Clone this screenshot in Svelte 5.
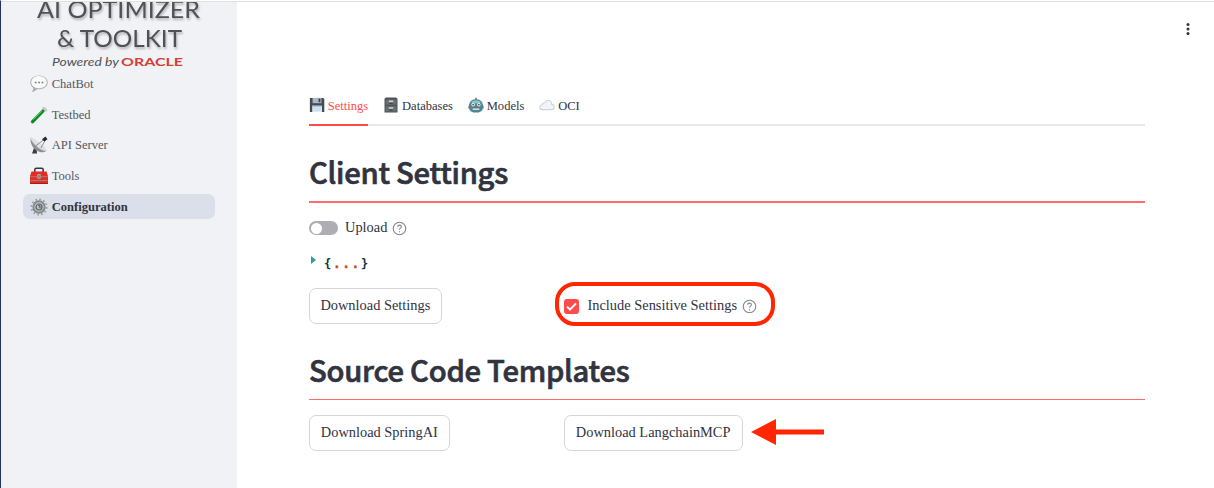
<script>
  const nav = ['ChatBot', 'Testbed', 'API Server', 'Tools', 'Configuration'];
  const tabs = ['Settings', 'Databases', 'Models', 'OCI'];
</script>

{#snippet icon(name)}
  <svg class="icon" viewBox="0 0 18 18" aria-hidden="true">
    {#if name === 'ChatBot'}
      <path d="M9 .5C4 .5.3 3.5.3 7.5c0 2.2 1.1 4.2 3 5.4.1 1.7-.7 2.9-1.8 4 2.4-.2 4.2-1.2 5.4-2.7l1.8.1c5.2 0 9-2.9 9-6.8S14 .5 9 .5z" fill="#adadad" />
      <path d="M9 1.1C4.4 1.1 1.3 3.8 1.3 7.3s3 6 7.7 6 7.7-2.7 7.7-6S13.6 1.1 9 1.1z" fill="#f9f9f9" />
      <path d="M4.8 6.7h1.7v1.6H4.8zM8.2 6.7h1.7v1.6H8.2zM11.6 6.7h1.7v1.6h-1.7z" fill="#777" />
    {:else if name === 'Testbed'}
      <path d="M2.2 16L14.8 3.2" stroke="#c9d2ce" stroke-width="3.8" stroke-linecap="round" />
      <path d="M2.6 15.6L13 5" stroke="#078b24" stroke-width="3.1" stroke-linecap="round" />
      <path d="M3.5 13.5L12 4.9" stroke="#5dcd59" stroke-width="1" />
      <path d="M13.2 1.8l3.1 2.8" stroke="#c4c6cb" stroke-width="2" stroke-linecap="round" />
    {:else if name === 'API Server'}
      <path d="M4 12l-2 5.5h5L6.7 13z" fill="#3a3d3f" />
      <path d="M.8 1.5C-.5 7 3 14.5 10 16c3 .6 5.7-.2 6.5-1.6z" fill="#8e9190" />
      <path d="M.8 1.5C3 .8 17.2 11.8 16.5 14.4c-1 1.2-5.5.2-9.4-3.6S-.5 2.7.8 1.5z" fill="#dfe0df" />
      <path d="M5.5 10L14 3.5M11 12l4.3-8" stroke="#777" stroke-width=".8" />
      <path d="M12 3.2l3.5-2.6 2 2.6-3.2 2.3z" fill="#272829" />
    {:else if name === 'Tools'}
      <path d="M4.8 5V2.8q0-1.6 1.6-1.6h5.2q1.6 0 1.6 1.6V5" fill="none" stroke="#35343a" stroke-width="1.5" />
      <path d="M1.5 4.5h15L18 9v8H0V9z" fill="#e22c24" />
      <path d="M0 9.2h18v1H0zM.5 13h17v1H.5z" fill="#b07a7c" />
      <path d="M0 16h18v1H0z" fill="#a81c18" />
      <rect x="7.3" y="7" width="3.4" height="4.8" rx=".6" fill="#a6a9aa" />
      <path d="M8.4 8.2h1.2v2.2H8.4z" fill="#6b6d71" />
    {:else if name === 'Configuration'}
      <circle cx="9" cy="9" r="7.7" fill="none" stroke="#a0a2a3" stroke-width="1.7" stroke-dasharray="1.8 2.23" />
      <circle cx="9" cy="9" r="5.7" fill="#c3c5c5" stroke="#85898b" stroke-width="1.9" />
      <circle cx="9" cy="9" r="3" fill="#b9c0c5" stroke="#596168" stroke-width="1.2" />
      <path d="M8.3 7.6l1.8.3-.3 2.3" fill="none" stroke="#3e474e" />
    {:else if name === 'Settings'}
      <path d="M1 1h15l1.2 1.3V17H1z" fill="#47494d" />
      <path d="M4 1h10v6H4z" fill="#aeb6be" />
      <path d="M10.8 1.8h2v4h-2z" fill="#3c4045" />
      <path d="M3.6 9h11v8h-11z" fill="#dceaf4" />
      <path d="M3.6 9h11v1.6h-11z" fill="#6897c3" />
      <path d="M5 12.4h8M5 14.7h8" stroke="#b7c7d2" stroke-width=".7" />
    {:else if name === 'Databases'}
      <path d="M3.4.6h11.2L16.3 2v15.3H1.7V2z" fill="#4d5254" />
      <path d="M2.7 2.8h12.6v5.9H2.7zM2.7 10h12.6v6.4H2.7z" fill="#686e70" />
      <path d="M6.5 4h5v1.8h-5zM6.5 11.4h5v1.8h-5z" fill="#d2d4d4" />
      <path d="M7 7h4M7 14.6h4" stroke="#393e40" stroke-width="1.2" />
    {:else if name === 'Models'}
      <path d="M9 4V.8" stroke="#b76c58" stroke-width="2" />
      <path d="M.5 10L3 7v6.5L.5 13zM17.5 10L15 7v6.5l2.5-.5z" fill="#a45045" />
      <path d="M1.2 9Q2 2.4 9 2.4T16.8 9l-.4 5q-1.2 3.5-7.4 3.5T1.6 14z" fill="#468b9b" />
      <path d="M3.4 5.5Q9 2 14.6 5.5L12.4 7H5.6z" fill="#86c4ca" />
      <circle cx="5.8" cy="8.6" r="2" fill="#e8f3ea" /><circle cx="12.2" cy="8.6" r="2" fill="#e8f3ea" />
      <circle cx="5.8" cy="8.6" r=".9" fill="#4d3039" /><circle cx="12.2" cy="8.6" r=".9" fill="#4d3039" />
      <path d="M9 9l1.2 2.2H7.8z" fill="#c55243" />
      <rect x="4.7" y="12.5" width="8.6" height="2.5" rx="1" fill="#e6e9e4" stroke="#44616c" stroke-width=".7" />
    {:else if name === 'OCI'}
      <path d="M4.2 15C1.7 15 .3 13.5.3 11.6c0-1.8 1.2-3 2.9-3.2.2-1.6 1.7-2.5 3.3-2C7.2 4.2 8.8 3 11 3.3c2.5.3 3.8 2 3.7 4.6 1.8.3 3 1.6 3 3.4 0 2.2-1.4 3.7-3.7 3.7z" fill="#c2cbd4" />
      <path d="M4.6 13.8c-2 0-3.3-1-3.3-2.5s1-2.4 2.8-2.3c0-1.8 1.6-2.3 3-1.7.4-2 2-3.3 4-3 2 .4 3 1.9 2.6 4.4 1.8 0 2.9 1.1 2.9 2.5 0 1.6-1.3 2.6-3 2.6z" fill="#f2f5f7" />
    {/if}
  </svg>
{/snippet}

{#snippet help()}
  <svg class="help" viewBox="0 0 24 24" aria-hidden="true">
    <circle cx="12" cy="12" r="10" />
    <path d="M9 9.3q0-2.8 3-2.8t3 2.8q0 1-1.5 2.1T12 14" />
    <path d="M12 16.2v2" />
  </svg>
{/snippet}

<div class="app">
  <aside>
    <svg class="logo" viewBox="0 0 236 69" role="img" aria-label="AI Optimizer and Toolkit">
      <g class="brand">
        <text x="37" y="18.2" textLength="163" lengthAdjust="spacingAndGlyphs">AI OPTIMIZER</text>
        <text x="57" y="46.5" textLength="125" lengthAdjust="spacingAndGlyphs">&amp; TOOLKIT</text>
      </g>
      <text class="powered" x="52" y="66" textLength="67" lengthAdjust="spacingAndGlyphs">Powered by</text>
      <text class="oracle" x="121" y="66" textLength="62" lengthAdjust="spacingAndGlyphs">ORACLE</text>
    </svg>
    <nav>
      {#each nav as item}
        <a class:active={item === 'Configuration'}>{@render icon(item)}<span>{item}</span></a>
      {/each}
    </nav>
  </aside>
  <main>
    <svg class="menu" viewBox="0 0 4 14" aria-hidden="true">
      <circle cx="2" cy="2.6" r="1.5" /><circle cx="2" cy="7" r="1.5" /><circle cx="2" cy="11.4" r="1.5" />
    </svg>
    <div class="tabs">
      {#each tabs as tab}
        <div class="tab" class:selected={tab === 'Settings'}>{@render icon(tab)}<span>{tab}</span></div>
      {/each}
    </div>
    <h1>Client Settings</h1>
    <div class="rule"></div>
    <div class="upload"><span class="toggle"></span><span class="label">Upload</span>{@render help()}</div>
    <div class="json"><i></i><b>{'{'}<em>...</em>{'}'}</b></div>
    <div class="row">
      <div><button>Download Settings</button></div>
      <div class="check">
        <svg class="box" viewBox="0 0 15 15" aria-hidden="true"><rect width="15" height="15" rx="3" /><path d="M3 7.6l3 3 6-6.2" /></svg>
        <span class="label">Include Sensitive Settings</span>{@render help()}
        <span class="highlight"></span>
      </div>
    </div>
    <h1 class="second">Source Code Templates</h1>
    <div class="rule thin"></div>
    <div class="row templates">
      <div><button class="wide">Download SpringAI</button></div>
      <div class="target">
        <button class="wide">Download LangchainMCP</button>
        <svg class="arrow" viewBox="0 0 74 26" aria-hidden="true"><path d="M0 13L25 0v10.5h48v5H25V26z" /></svg>
      </div>
    </div>
  </main>
</div>

<style>
  :global(body) { margin: 0; background: #fff; }
  .app {
    box-sizing: border-box; width: 1214px; height: 488px; display: flex; overflow: hidden;
    border-left: 1px solid #24315a; border-top: 1px solid #fff; color: #31333f;
    font: 14.4px/20px "Liberation Serif", serif;
  }
  aside { width: 236px; flex: none; background: #f0f2f6; border-top: 1px solid #dfe2df; box-sizing: border-box; }
  .logo { display: block; width: 236px; height: 69px; margin: -2px 0 0 -1px; overflow: hidden; clip-path: inset(2px 0 0 0); }
  .brand { fill: #505153; font: 23px Lato, sans-serif; filter: drop-shadow(1px 2px 1px #0004); }
  .powered { fill: #505153; font: italic 12px Lato, sans-serif; }
  .oracle { fill: #d14035; font: bold 11px Lato, sans-serif; }
  nav { display: flex; flex-direction: column; gap: 5.8px; padding: 2.3px 22px 0; }
  nav a { display: flex; align-items: center; gap: 3.7px; height: 25px; padding-left: 7px; border-radius: 7px; font-size: 12.55px; color: #555762; }
  nav .icon { width: 18px; height: 18px; }
  nav .active { background: #dadfe9; color: #31333f; font-weight: bold; }
  .icon { flex: none; display: block; }
  main { flex: 1; display: flex; flex-direction: column; border-top: 1px solid #dfe2df; padding: 0 69px 0 72px; }
  .menu { width: 4px; height: 14px; align-self: flex-end; margin: 20px -45px 0 0; fill: #31333f; }
  .tabs { display: flex; gap: 15px; margin-top: 57px; height: 31px; border-bottom: 2px solid #e8e8ea; font-size: 12.55px; }
  .tab { display: flex; gap: 2.8px; height: 31px; border-bottom: 2px solid transparent; line-height: 26px; }
  .tab .icon { width: 16px; height: 16px; margin-top: 4px; }
  .selected { color: #ff4b4b; border-color: #ff4b4b; }
  h1 { margin: 24px 0 0; height: 43px; font: 500 29.2px/43px "Noto Sans CJK SC", sans-serif; letter-spacing: -0.25px; white-space: nowrap; -webkit-text-stroke: 0.7px #31333f; }
  .rule { height: 2px; background: #ff6c6c; margin-top: 8px; }
  .upload { display: flex; align-items: center; height: 20px; margin-top: 15px; }
  .toggle { width: 29px; height: 14px; border-radius: 7px; background: #adadb2; margin-right: 7px; display: flex; align-items: center; }
  .toggle::before { content: ""; width: 11px; height: 11px; border-radius: 50%; background: #fff; margin-left: 1.5px; }
  .label { padding-bottom: 2px; }
  .help { width: 15px; height: 15px; margin-left: 5px; fill: none; stroke: #85868d; stroke-width: 1.8; }
  .json { display: flex; height: 20px; margin-top: 15px; font: bold 12px/22px "DejaVu Sans Mono", monospace; color: #073642; }
  .json i { width: 0; height: 0; margin: 3px 8px 0 2px; border: 4px solid transparent; border-left: 5px solid #2aa198; border-right: 0; }
  .json em { font-style: normal; color: #cb4b16; -webkit-text-stroke: 0.5px #cb4b16; }
  .json b { letter-spacing: 2px; }
  .row { display: grid; grid-template-columns: 255px 1fr; margin-top: 15px; height: 36px; }
  button { box-sizing: border-box; height: 36px; padding: 0 10.4px 2px; border: 1px solid #d6d6d9; border-radius: 7px; background: #fff; color: inherit; font: inherit; white-space: nowrap; }
  .wide { padding: 0 11.2px 2px 10.8px; }
  .check { position: relative; display: flex; align-items: center; }
  .box { width: 15px; height: 15px; margin-right: 8.5px; fill: #ff4b4b; }
  .box path { fill: none; stroke: #fff; stroke-width: 2; }
  .highlight { position: absolute; box-sizing: border-box; left: -9px; top: -6px; width: 220px; height: 44px; border: 4px solid #ff2600; border-radius: 20px; }
  .second { margin-top: 24px; }
  .thin { height: 1px; margin-top: 8px; }
  .templates { margin-top: 15px; }
  .target { position: relative; }
  .arrow { position: absolute; left: 187px; top: 4px; width: 74px; height: 26px; fill: #ff2600; }
</style>
